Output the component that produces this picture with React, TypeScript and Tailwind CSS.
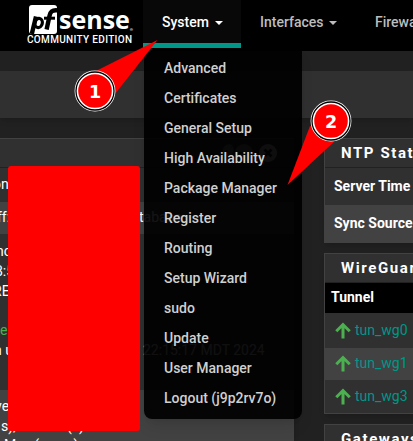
import React from "react";

const menuItems = [
  "Advanced",
  "Certificates",
  "General Setup",
  "High Availability",
  "Package Manager",
  "Register",
  "Routing",
  "Setup Wizard",
  "sudo",
  "Update",
  "User Manager",
  "Logout (j9p2rv7o)",
];

const Caret = () => (
  <span className="ml-[6px] inline-block border-x-4 border-t-4 border-x-transparent border-t-current align-middle" />
);

function Logo() {
  return (
    <div className="ml-[27px] w-[107px] shrink-0 pt-[5px]">
      <div className="ml-[2px] flex h-[29px]">
        <div className="h-[29px] w-[28px] shrink-0 rounded-[3px] bg-white">
          <svg width="31" height="29" viewBox="0 0 31 29" className="block overflow-visible">
            <g fill="none" stroke="#000">
              <path d="M7 11.5L2.8 29" strokeWidth="4.4" />
              <ellipse cx="9.6" cy="18" rx="3.7" ry="4.7" strokeWidth="3.2" transform="rotate(14 9.6 18)" />
              <path d="M17.6 24.5L20.6 10.5C21.4 6.6 23.5 4.6 29 5.4" strokeWidth="4.4" />
              <path d="M15 13.2H26" strokeWidth="3" />
            </g>
          </svg>
        </div>
        <span className="ml-[2px] mt-px font-['Open_Sans'] text-[25px] font-bold leading-[27px] tracking-[0px] text-white">
          sense
        </span>
        <span className="mt-[21px] text-[4px] leading-[8px] text-white">®</span>
      </div>
      <div className="mt-px whitespace-nowrap text-[10px] font-medium leading-[10px] tracking-[0.33px] text-white">
        COMMUNITY EDITION
      </div>
    </div>
  );
}

function Navbar() {
  return (
    <nav className="flex h-[51px] w-full overflow-hidden whitespace-nowrap bg-black text-[14px] font-medium leading-[20px] text-[#bdbdbd]">
      <Logo />
      <div className="ml-[9px] h-12 w-[98px] shrink-0 border-b-[5px] border-[#009688] bg-[#080808] pl-[19px] pt-[12px] text-white">
        System
        <Caret />
      </div>
      <div className="ml-[19px] w-[114px] shrink-0 pt-[12px]">
        Interfaces
        <Caret />
      </div>
      <div className="pl-px pt-[12px]">Firewall</div>
    </nav>
  );
}

function PanelTools() {
  return (
    <svg width="62" height="20" viewBox="0 0 62 20">
      <path
        d="M3 16L9 10M9 10C7 5 11 2 14 3L11.5 6L13.5 8L16 6C17 10 13 12 9 10"
        fill="none"
        stroke="#757575"
        strokeWidth="3"
      />
      <circle cx="28" cy="10" r="9" fill="#757575" />
      <path d="M23 10H33" stroke="#303030" strokeWidth="2.5" />
      <circle cx="52" cy="10" r="9" fill="#b5b5b5" />
      <path d="M48.5 6.5L55.5 13.5M55.5 6.5L48.5 13.5" stroke="#101010" strokeWidth="2.8" />
    </svg>
  );
}

function LeftPanel() {
  return (
    <section className="h-[303px] w-[294px] shrink-0 overflow-hidden whitespace-nowrap border-t border-[#424242] bg-[#303030] text-[14px] leading-[20px] text-white shadow-md">
      <div className="flex h-[29px] items-center justify-end border-b border-[#212121] pr-[16px]">
        <PanelTools />
      </div>
      <div className="h-[34px] pt-[6px]"><span className="-ml-[7px]">on</span></div>
      <div className="flex h-[32px] bg-[#424242] pt-[5px]">
        <span className="-ml-[3px] w-[142px]">ff:</span>
        <span>tabase</span>
      </div>
      <div className="h-[156px] pt-[7px]">
        <div className="-ml-[4px]">nc</div>
        <div className="-ml-[5px]">8:5</div>
        <div className="-ml-[7px]">RE</div>
        <div className="h-[19px]" />
        <div className="text-[#4caf50]">e</div>
        <div className="flex">
          <span className="-ml-[6px] w-[149px]">n up</span>
          <span className="text-[#c8c8c8]">22:15:17 MDT 2024</span>
        </div>
      </div>
      <div className="h-[52px] bg-[#424242] pt-[6px]">
        <div className="-ml-[5px]">ve</div>
        <div className="flex"><span className="w-[67px] pl-px">s),</span><span>(s)</span></div>
        <div className="pl-[4px] leading-[18px]">Max (cores)</div>
      </div>
    </section>
  );
}

function PanelTitle({ children }: { children: React.ReactNode }) {
  return (
    <h2 className="h-[29px] border-b border-[#212121] pl-[16px] text-[15px] font-bold leading-[28px] tracking-[1.6px]">
      {children}
    </h2>
  );
}

const tunnels = [
  { name: "tun_wg0", row: "h-[35px]" },
  { name: "tun_wg1", row: "h-[32px] bg-[#424242] pb-[2px]" },
  { name: "tun_wg3", row: "h-[33px]" },
];

function RightColumn() {
  return (
    <div className="ml-[30px] w-[110px] shrink-0 whitespace-nowrap text-[14px] text-white">
      <section className="h-[105px] border border-[#424242] bg-[#303030] shadow-md">
        <PanelTitle>NTP Status</PanelTitle>
        <div className="h-[37px] pl-[9px] font-bold leading-[37px]">Server Time</div>
        <div className="h-[37px] bg-[#424242] pl-[9px] font-bold leading-[36px]">Sync Source</div>
      </section>
      <section className="mt-[10px] h-[161px] border border-[#424242] bg-[#303030] shadow-md">
        <PanelTitle>WireGuard</PanelTitle>
        <div className="h-[30px] bg-black pl-[6px] font-bold leading-[28px]">Tunnel</div>
        {tunnels.map(({ name, row }) => (
          <div key={name} className={`flex items-center pl-[10px] text-[#009688] ${row}`}>
            <svg width="16" height="17" viewBox="0 0 16 17" fill="none" stroke="#4caf50" strokeWidth="3">
              <path d="M8 16.5V2.5M1.3 9.2L8 2.5L14.7 9.2" />
            </svg>
            <span className="ml-[4px]">{name}</span>
          </div>
        ))}
      </section>
      <section className="mt-[10px] h-[60px] border border-[#424242] bg-[#303030]">
        <PanelTitle>Gateways</PanelTitle>
      </section>
    </div>
  );
}

function SystemMenu() {
  return (
    <ul className="absolute left-[144px] top-[48px] h-[371px] w-[158px] rounded-b-[8px] bg-black/[0.92] pl-[20px] pt-[5px] text-[14px] font-medium text-[#d0d0d0] shadow-lg">
      {menuItems.map((item) => (
        <li key={item} className="h-[30px] whitespace-nowrap leading-[30px]">
          {item}
        </li>
      ))}
    </ul>
  );
}

function Callouts() {
  return (
    <svg className="absolute left-0 top-0" width="413" height="441" viewBox="0 0 413 441">
      <g fill="#f00">
        <path d="M157.500 40L96 71L115 94Z" />
        <path d="M287.500 185L310 126L336 140Z" />
      </g>
      {[
        { x: 95, y: 91, n: "1" },
        { x: 331, y: 121, n: "2" },
      ].map(({ x, y, n }) => (
        <g key={n}>
          <circle cx={x} cy={y} r="18.6" fill="#f00" stroke="#fff" strokeWidth="3.6" />
          <circle cx={x} cy={y} r="19" fill="none" stroke="#000" strokeWidth="1.3" />
          <text x={x} y={y + 7} textAnchor="middle" fill="#fff" fontFamily="DejaVu Sans, sans-serif" fontSize="17.5" fontWeight="700">
            {n}
          </text>
        </g>
      ))}
    </svg>
  );
}

export default function App() {
  return (
    <div className="relative h-[441px] w-[413px] overflow-hidden bg-[#212121] font-['Roboto',sans-serif]">
      <Navbar />
      <div className="mt-[20px] h-[47px] bg-[#303030] shadow-md" />
      <main className="mt-[20px] flex">
        <LeftPanel />
        <RightColumn />
      </main>
      <SystemMenu />
      <div className="absolute left-[8px] top-[166px] h-[265px] w-[132px] rounded-[3px] bg-[#f00]" />
      <Callouts />
    </div>
  );
}
